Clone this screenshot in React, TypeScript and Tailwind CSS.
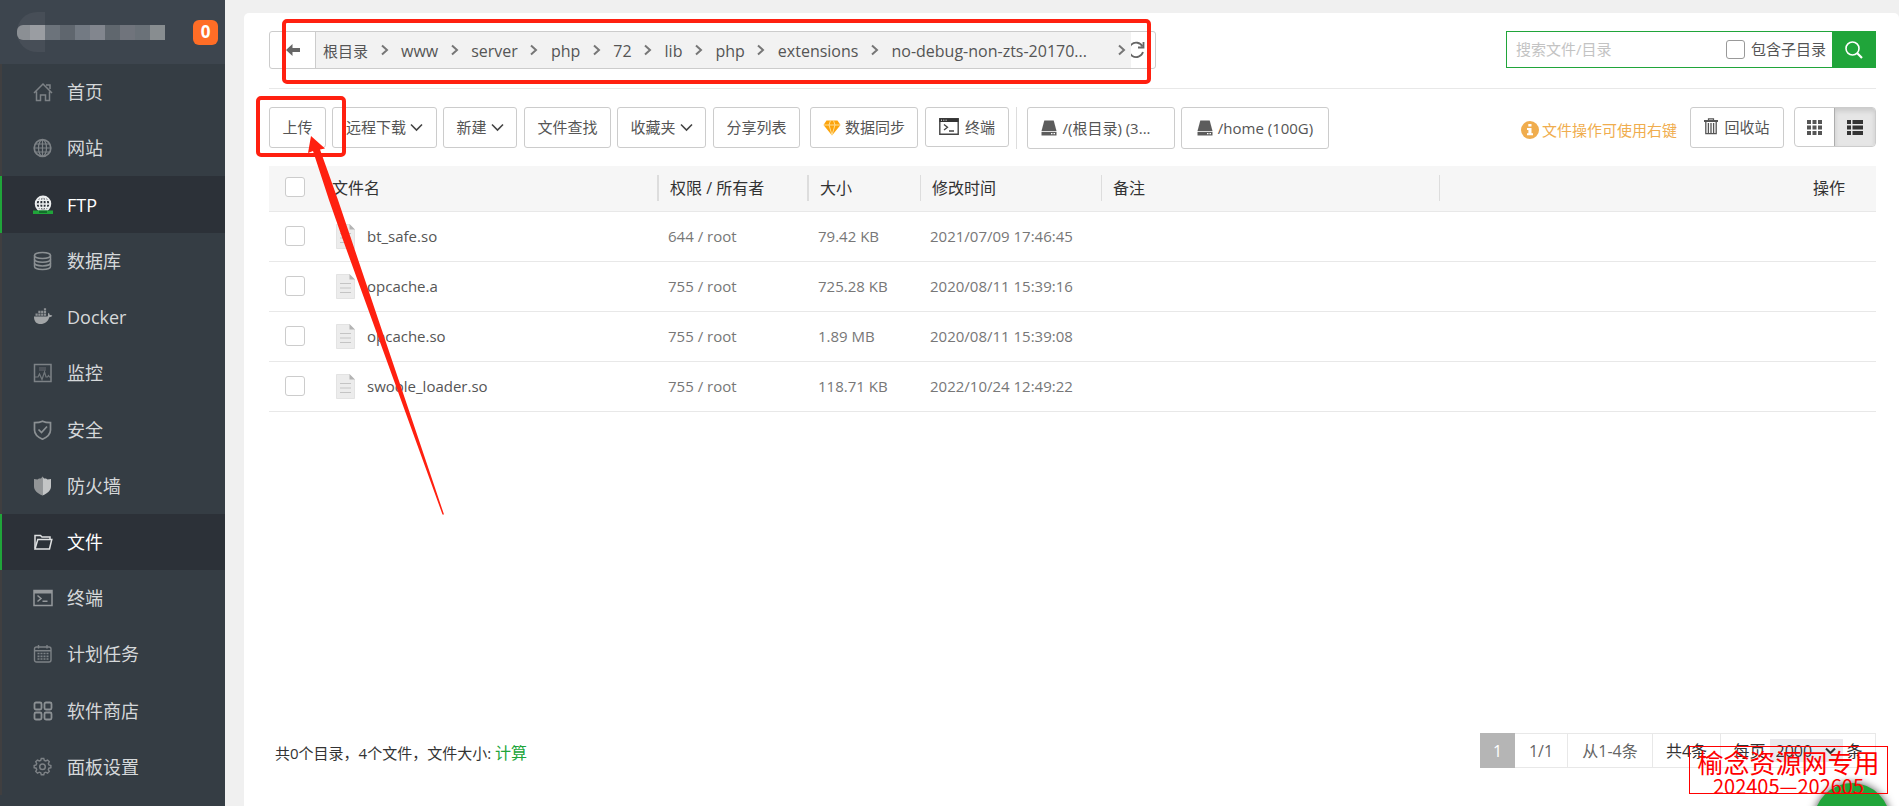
import React, { useState } from "react";

const HomeIcon = () => (
  <svg width="20" height="20" viewBox="0 0 20 20" fill="none" stroke="currentColor" strokeWidth="1.5">
    <path d="M1 11 10 2l9 9M3.500 9.500V18.500h4V13h5v5.500h4v-9M13 3h4v4" />
  </svg>
);
const GlobeIcon = () => (
  <svg width="20" height="20" viewBox="0 0 20 20" fill="none" stroke="currentColor" strokeWidth="1.2">
    <circle cx="9.500" cy="10" r="8.300" strokeWidth="1.700" />
    <ellipse cx="9.500" cy="10" rx="4" ry="8.300" />
    <path d="M9.500 2v16M1.500 10h16M2.700 6h13.600M2.700 14h13.600" />
  </svg>
);
const FtpIcon = () => (
  <svg width="20" height="20" viewBox="0 0 20 20" fill="none">
    <g stroke="#eceeef" strokeWidth="1.900">
      <circle cx="10" cy="8.800" r="7.300" />
      <ellipse cx="10" cy="8.800" rx="3.500" ry="7.300" strokeWidth="1.500" />
      <path d="M10 2v14M3 9h14M4 5.300h12M4 12.500h12" strokeWidth="1.400" />
    </g>
    <path d="M0 15.500h20V19H0z" fill="#20a53a" />
    <path d="M6 15.500h8V18H6z" fill="#12702a" />
  </svg>
);
const DatabaseIcon = () => (
  <svg width="20" height="20" viewBox="0 0 20 20" fill="none" stroke="#8b9093" strokeWidth="1.500">
    <ellipse cx="9.500" cy="4.500" rx="8" ry="3" />
    <path d="M1.500 4.500v11c0 1.700 3.600 3 8 3s8-1.300 8-3v-11" />
    <path d="M1.500 8.200c0 1.700 3.600 3 8 3s8-1.300 8-3M1.500 11.900c0 1.700 3.600 3 8 3s8-1.300 8-3" />
  </svg>
);
const DockerIcon = () => (
  <svg width="20" height="20" viewBox="0 0 20 20" fill="#a2a5a7">
    <path d="M1 9.500h12.800c.8 0 1.300-.6 1.200-1.500-.1-.9.100-1.600.5-2.200.8.600 1.200 1.400 1.200 2.300 1-.2 1.900 0 2.600.4-.5 1.200-1.400 1.700-3 1.700C15 14.500 11.800 17 7.500 17 3.500 17 .9 14.500 1 9.500Z" />
    <path d="M2.500 6.500h2.200v2.200H2.500zM5.300 6.500h2.200v2.200H5.300zM8.100 6.500h2.200v2.200H8.100zM10.900 6.500h2.200v2.200h-2.200zM5.300 3.800h2.200V6H5.300zM8.100 3.800h2.200V6H8.100zM10.900 3.800h2.200V6h-2.200zM10.900 1.300h2.200v2h-2.200z" opacity=".8" />
  </svg>
);
const MonitorIcon = () => (
  <svg width="20" height="20" viewBox="0 0 20 20" fill="none" stroke="currentColor">
    <path d="M1.500 1.500h16.500v17H1.500z" strokeWidth="1.500" />
    <path d="M6 5h7M6 7h7" strokeWidth="1" opacity=".7" />
    <path d="M2 14h3l1.500-3 2.500 5.500L11.500 9l1.500 5h1.500l1-1.500 1 1.500H18" strokeWidth="1.200" opacity=".85" />
  </svg>
);
const ShieldCheckIcon = () => (
  <svg width="20" height="20" viewBox="0 0 20 20" fill="none" stroke="#8b9093" strokeWidth="1.700">
    <path d="M9.500 1.200c2.400 1.200 5 1.500 8 1.500V10c0 4-3 7-8 9.200C4.500 17 1.500 14 1.500 10V2.700c3 0 5.600-.3 8-1.500Z" />
    <path d="m5.500 9.500 3 3 5.500-6" />
  </svg>
);
const FirewallIcon = () => (
  <svg width="20" height="20" viewBox="0 0 20 20">
    <path d="M9.500.5 8 2.500H6L4.500 3.500 1 3v7.500c0 4 3.500 7 8.500 9Z" fill="#929597" />
    <path d="m9.500.5 1.500 2h2l1.500 1 3.500-.5v7.500c0 4-3.500 7-8.500 9Z" fill="#c3c5c6" />
  </svg>
);
const FolderIcon = () => (
  <svg width="20" height="20" viewBox="0 0 20 20" fill="none" stroke="#dfe1e2" strokeWidth="1.500">
    <path d="M2 16.500V3.500h5.500L9 5h8v2.500" />
    <path d="M2 17 4.800 7.500h14L16.500 17Z" />
  </svg>
);
const TerminalIcon = () => (
  <svg width="20" height="20" viewBox="0 0 20 20" fill="none" stroke="#94989b">
    <path d="M1 2.500h18v15H1z" strokeWidth="1.500" />
    <path d="M1 4h18" strokeWidth="3" />
    <path d="m4.500 7.500 3.500 3-3.500 3M9.500 13.300h5" strokeWidth="1.500" />
  </svg>
);
const CalendarIcon = () => (
  <svg width="20" height="20" viewBox="0 0 20 20" fill="none" stroke="currentColor" strokeWidth="1.400">
    <rect x="1.500" y="3" width="16.500" height="15" rx="2" />
    <path d="M1.500 6.800H18M5.500 1v3.500M14 1v3.500" />
    <path d="M4.500 9.500h11M4.500 12.300h11M4.500 15h11" strokeWidth="1.700" strokeDasharray="2 1" />
  </svg>
);
const AppsIcon = () => (
  <svg width="20" height="20" viewBox="0 0 20 20" fill="none" stroke="#8b9093" strokeWidth="1.800">
    <rect x="1.500" y="1.500" width="7" height="7" rx="1.500" />
    <rect x="11.500" y="1.500" width="7" height="7" rx="1.500" />
    <rect x="1.500" y="11.500" width="7" height="7" rx="1.500" />
    <rect x="11.500" y="11.500" width="7" height="7" rx="1.500" />
  </svg>
);
const GearIcon = () => (
  <svg width="20" height="20" viewBox="0 0 20 20" fill="none" stroke="currentColor" strokeWidth="1.500">
    <path d="M8.200 1.500h2.600l.6 2.100 1.500.6 1.900-1 1.800 1.800-1 1.900.6 1.500 2.100.6v2.200l-2.100.6-.6 1.500 1 1.900-1.800 1.800-1.900-1-1.500.6-.6 2.100H8.200l-.6-2.100-1.500-.6-1.900 1-1.800-1.800 1-1.900-.6-1.500-2.100-.6V9l2.100-.6.600-1.500-1-1.900 1.800-1.800 1.900 1 1.500-.6Z" transform="translate(.5 0) scale(.95)" />
    <circle cx="9.500" cy="9.800" r="2.800" />
  </svg>
);

const ChevronRight = () => (
  <svg className="shrink-0" width="8" height="12" viewBox="0 0 8 12" fill="none" stroke="#777" strokeWidth="2">
    <path d="m1 1.500 5 4.500-5 4.500" />
  </svg>
);
const ChevronDown = () => (
  <svg width="13" height="9" viewBox="0 0 13 9" fill="none" stroke="#444" strokeWidth="1.600">
    <path d="m1 1.500 5.500 5.500L12 1.500" />
  </svg>
);
const DiskIcon = () => (
  <svg width="16" height="16" viewBox="0 0 16 16">
    <path d="M3.300.5h9.400L15.500 11H.5Z" fill="#5c5c5c" />
    <path d="M.5 11.800h15v3.700H.5z" fill="#5c5c5c" />
    <path d="M10 13h1.500v1.300H10zM12.500 13H14v1.300h-1.500z" fill="#fff" />
  </svg>
);
const DiamondIcon = () => (
  <svg width="18" height="16" viewBox="0 0 18 16">
    <path d="M3.500.5h11L17.500 5 9 15.500.5 5Z" fill="#fca40c" />
    <path d="M1 5h16M6 5l3 10 3-10M6 5l1.500-4.500M12 5 10.500.5" stroke="#ffe3a3" strokeWidth=".9" fill="none" />
  </svg>
);
const WindowIcon = () => (
  <svg className="mb-[2px]" width="20" height="17" viewBox="0 0 20 17" fill="none">
    <path d="M.8.8h18.400v15.400H.8z" stroke="#444" strokeWidth="1.400" fill="#fff" />
    <path d="M.5.5h19v3.500H.5z" fill="#333" />
    <path d="M2 2.200h1M4.300 2.200h1M6.600 2.200h1" stroke="#fff" />
    <path d="m5 6.500 3.500 2.800L5 12M10 13h5" stroke="#444" strokeWidth="1.300" />
  </svg>
);
const TrashIcon = () => (
  <svg className="mb-[3px]" width="14" height="17" viewBox="0 0 14 17" fill="none" stroke="#555">
    <path d="M0 3h14" strokeWidth="2" />
    <path d="M4.500 2.500V.8h5v1.700" strokeWidth="1.200" />
    <path d="M1.800 4v11.600h10.400V4M4.400 5v10M7 5v10M9.600 5v10" strokeWidth="1.300" />
  </svg>
);
const FileIcon = () => (
  <svg className="shrink-0" width="19" height="25" viewBox="0 0 19 25">
    <path d="M.5.5h13l5 5v19H.5Z" fill="#ececec" stroke="#e3e3e3" />
    <path d="M13.500 0v5.500H19Z" fill="#b4b4b4" />
    <path d="M4 9.500h11M4 14h11M4 18.500h11" stroke="#c4c4c4" />
  </svg>
);

const menu = [
  { label: "首页", Icon: HomeIcon },
  { label: "网站", Icon: GlobeIcon },
  { label: "FTP", Icon: FtpIcon, active: true },
  { label: "数据库", Icon: DatabaseIcon },
  { label: "Docker", Icon: DockerIcon },
  { label: "监控", Icon: MonitorIcon },
  { label: "安全", Icon: ShieldCheckIcon },
  { label: "防火墙", Icon: FirewallIcon },
  { label: "文件", Icon: FolderIcon, active: true },
  { label: "终端", Icon: TerminalIcon },
  { label: "计划任务", Icon: CalendarIcon },
  { label: "软件商店", Icon: AppsIcon },
  { label: "面板设置", Icon: GearIcon },
];

const crumbs = ["www", "server", "php", "72", "lib", "php", "extensions"];

const files = [
  { name: "bt_safe.so", perm: "644 / root", size: "79.42 KB", time: "2021/07/09 17:46:45" },
  { name: "opcache.a", perm: "755 / root", size: "725.28 KB", time: "2020/08/11 15:39:16" },
  { name: "opcache.so", perm: "755 / root", size: "1.89 MB", time: "2020/08/11 15:39:08" },
  { name: "swoole_loader.so", perm: "755 / root", size: "118.71 KB", time: "2022/10/24 12:49:22" },
];

const mosaic = [
  "bg-[#8b8f94]", "bg-[#9a9da2]", "bg-[#6c737b]", "bg-[#5f666e]", "bg-[#737a83]",
  "bg-[#82868e]", "bg-[#60676e]", "bg-[#70747c]", "bg-[#6a7178]", "bg-[#888d90]",
];

const btn =
  "flex shrink-0 items-center justify-center whitespace-nowrap rounded-[3px] border border-[#ccc] bg-white text-[15px] text-[#555]";
const check =
  "block size-5 appearance-none rounded-[3px] border border-[#ccc] bg-white checked:bg-[#20a53a]";

function Sidebar() {
  return (
    <aside className="flex w-[225px] shrink-0 flex-col bg-[#353d44]">
      <header className="flex h-16 shrink-0 items-center justify-between bg-[#3d454e] pr-[7px] pl-[17px]">
        <div className="relative flex h-10 items-center">
          <span className="absolute top-0 left-0 h-10 w-7 rounded-l-full bg-[#474e57]" />
          <span className="relative flex overflow-hidden rounded-l-md">
            {mosaic.map((c, i) => (
              <span key={i} className={`block h-[15px] w-[15px] first:w-[13px] ${c}`} />
            ))}
          </span>
        </div>
        <span className="flex size-[25px] items-center justify-center rounded-md bg-[#ff6d26] text-[17px] font-bold text-white">
          0
        </span>
      </header>
      <nav className="flex flex-1 flex-col pb-[11px]">
        {menu.map(({ label, Icon, active }) => (
          <a
            key={label}
            href="#"
            className={`flex min-h-[50px] flex-1 items-center gap-[14px] border-l-2 pl-[31px] text-[18px] leading-6 ${
              active ? "border-[#20a53a] bg-[#2c3138] text-white" : "border-[#403f40] text-[#d5d8da]"
            }`}
          >
            <span className="text-[#7d8286]">
              <Icon />
            </span>
            {label}
          </a>
        ))}
      </nav>
    </aside>
  );
}

function AddressBar() {
  return (
    <div className="flex h-[38px] w-[887px] shrink-0 overflow-hidden rounded-[3px] border border-[#ccc] bg-white">
      <button aria-label="返回" className="flex w-[46px] shrink-0 items-center justify-center border-r border-[#ccc]">
        <svg width="14" height="12" viewBox="0 0 14 12" fill="#666">
          <path d="M0 6 6.500 0v4H14v4H6.500v4Z" />
        </svg>
      </button>
      <div className="relative z-10 flex flex-1 items-center bg-[#f2f2f2] pl-[7px] text-[16px] text-[#555] [&>a]:pt-[2px]">
        <a href="#" className="text-[15px]">根目录</a>
        {crumbs.map((c, i) => (
          <React.Fragment key={i}>
            <span className="flex w-[33px] justify-center"><ChevronRight /></span>
            <a href="#">{c}</a>
          </React.Fragment>
        ))}
        <span className="flex w-[33px] justify-center"><ChevronRight /></span>
        <a href="#">no-debug-non-zts-20170...</a>
        <span className="mr-[5px] ml-auto"><ChevronRight /></span>
      </div>
      <button aria-label="刷新" className="flex w-6 shrink-0 items-center">
        <svg className="-ml-1 shrink-0" width="18" height="18" viewBox="0 0 18 18" fill="none" stroke="#666" strokeWidth="1.800">
          <path d="M15.500 5.500A7.200 7.200 0 1 0 16 11" />
          <path d="M16.500 1v5.500H11" />
        </svg>
      </button>
    </div>
  );
}

function SearchBox() {
  return (
    <div className="flex h-[37px] w-[370px] border border-[#20a53a] bg-white text-[15px]">
      <input
        aria-label="搜索文件/目录"
        placeholder="搜索文件/目录"
        className="min-w-0 flex-1 pl-[9px] outline-none placeholder:text-[#c3c3c3]"
      />
      <label className="flex shrink-0 items-center gap-[6px] pr-[6px] text-[#555]">
        <input type="checkbox" className="size-[19px] appearance-none rounded-[3px] border border-[#999] bg-white" />
        包含子目录
      </label>
      <button aria-label="搜索" className="flex w-[43px] shrink-0 items-center justify-center bg-[#20a53a]">
        <svg width="18" height="18" viewBox="0 0 18 18" fill="none" stroke="#fff">
          <circle cx="7.500" cy="7.500" r="6.500" strokeWidth="1.600" />
          <path d="m12.300 12.300 4.700 4.700" strokeWidth="2.200" />
        </svg>
      </button>
    </div>
  );
}

function Toolbar() {
  return (
    <div className="mt-[18px] flex h-[42px] items-start">
      <button className={`${btn} h-[41px] w-[57px]`}>上传</button>
      <button className={`${btn} ml-[6px] h-[41px] w-[105px] gap-1`}>远程下载<ChevronDown /></button>
      <button className={`${btn} ml-[6px] h-[41px] w-[74px] gap-1`}>新建<ChevronDown /></button>
      <button className={`${btn} ml-[7px] h-[41px] w-[87px]`}>文件查找</button>
      <button className={`${btn} ml-[6px] h-[41px] w-[89px] gap-1`}>收藏夹<ChevronDown /></button>
      <button className={`${btn} ml-[7px] h-[41px] w-[87px]`}>分享列表</button>
      <button className={`${btn} ml-[10px] h-[41px] w-[108px] gap-1`}><DiamondIcon />数据同步</button>
      <button className={`${btn} ml-[7px] h-10 w-[84px] gap-[6px]`}><WindowIcon />终端</button>
      <span className="ml-[7px] h-full w-px bg-[#ddd]" />
      <button className={`${btn} ml-[10px] h-[42px] w-[148px] gap-[5px] pr-[10px]`}><DiskIcon />/(根目录) (3...</button>
      <button className={`${btn} ml-[6px] h-[42px] w-[148px] gap-[5px]`}><DiskIcon />/home (100G)</button>

      <div className="ml-auto flex items-start">
        <p className="flex h-[46px] items-center gap-[3px] text-[15px] whitespace-nowrap text-[#f0ad4e]">
          <svg width="18" height="18" viewBox="0 0 18 18">
            <circle cx="9" cy="9" r="9" fill="#f0ad4e" />
            <path d="M7.300 3h3.200v2.600H7.300zM6 7h4.500v5.300H12v2H6v-2h1.400V9H6z" fill="#fff" />
          </svg>
          文件操作可使用右键
        </p>
        <button className={`${btn} ml-[13px] h-[41px] w-[94px] gap-[6px]`}><TrashIcon />回收站</button>
        <div className="ml-[10px] flex h-10 overflow-hidden rounded-[4px] border border-[#ccc]">
          <button aria-label="图标视图" className="flex w-[39px] items-center justify-center">
            <svg width="15" height="15" viewBox="0 0 15 15" fill="#555">
              <path d="M0 0h4v4H0zM5.500 0h4v4h-4zM11 0h4v4h-4zM0 5.500h4v4H0zM5.500 5.500h4v4h-4zM11 5.500h4v4h-4zM0 11h4v4H0zM5.500 11h4v4h-4zM11 11h4v4h-4z" />
            </svg>
          </button>
          <button aria-label="列表视图" className="flex w-[41px] items-center justify-center border-l border-[#adadad] bg-[#e6e6e6] shadow-[inset_0_3px_5px_rgba(0,0,0,0.125)]">
            <svg width="16" height="15" viewBox="0 0 16 15" fill="#333">
              <path d="M0 0h4v4H0zM5.500 0H16v4H5.500zM0 5.500h4v4H0zM5.500 5.500H16v4H5.500zM0 11h4v4H0zM5.500 11H16v4H5.500z" />
            </svg>
          </button>
        </div>
      </div>
    </div>
  );
}

function HeadCell({ children, line = "w-px" }: { children?: React.ReactNode; line?: string }) {
  return (
    <th className="p-0 text-left font-normal">
      <div className="flex h-[26px] items-center justify-between pl-[11px]">
        <span>{children}</span>
        <span className={`h-full bg-[#ddd] ${line}`} />
      </div>
    </th>
  );
}

function FileTable() {
  return (
    <table className="mt-[17px] w-full table-fixed border-collapse">
      <colgroup>
        <col className="w-[52px]" />
        <col className="w-[338px]" />
        <col className="w-[150px]" />
        <col className="w-[112px]" />
        <col className="w-[181px]" />
        <col className="w-[338px]" />
        <col />
      </colgroup>
      <thead>
        <tr className="h-[45px] border-b border-[#e8e8e8] bg-[#f6f6f6] text-[16px] text-[#333]">
          <th className="p-0 pb-[2px] pl-4 text-left"><input type="checkbox" aria-label="全选" className={check} /></th>
          <HeadCell line="w-[2px]">文件名</HeadCell>
          <HeadCell line="w-[2px]">权限 / 所有者</HeadCell>
          <HeadCell>大小</HeadCell>
          <HeadCell>修改时间</HeadCell>
          <HeadCell>备注</HeadCell>
          <th className="p-0 pr-[31px] text-right font-normal">操作</th>
        </tr>
      </thead>
      <tbody>
        {files.map((f) => (
          <tr key={f.name} className="h-[50px] border-b border-[#e8e8e8] text-[15px] text-[#777]">
            <td className="p-0 pl-4"><input type="checkbox" aria-label={f.name} className={check} /></td>
            <td className="p-0">
              <a href="#" className="flex items-center gap-3 pl-[15px] text-[#555]">
                <FileIcon />
                {f.name}
              </a>
            </td>
            <td className="p-0 pl-[9px]">{f.perm}</td>
            <td className="p-0 pl-[9px]">{f.size}</td>
            <td className="p-0 pl-[9px]">{f.time}</td>
            <td />
            <td />
          </tr>
        ))}
      </tbody>
    </table>
  );
}

function Footer() {
  const [perPage, setPerPage] = useState("2000");
  return (
    <footer className="mt-auto flex items-center justify-between pb-[38px] pl-[6px] text-[15px] text-[#333]">
      <p className="pt-1">
        共0个目录，4个文件，文件大小: <a href="#" className="text-[16px] text-[#20a53a]">计算</a>
      </p>
      <div className="flex h-[35px] w-[396px] border border-l-0 border-[#e8e8e8] text-[16px] *:flex *:items-center *:justify-center">
        <span className="-my-px w-[35px] bg-[#b5b5b5] text-white">1</span>
        <span className="w-[53px] border-r border-[#e8e8e8] text-[#666]">1/1</span>
        <span className="w-[85px] border-r border-[#e8e8e8] text-[#666]">从1-4条</span>
        <span className="w-[68px] border-r border-[#e8e8e8]">共4条</span>
        <label className="flex-1 gap-1 whitespace-nowrap">
          每页
          <span className="relative flex items-center">
            <select
              value={perPage}
              onChange={(e) => setPerPage(e.target.value)}
              className="h-[23px] w-[73px] appearance-none bg-[#e9e9ed] pl-[6px]"
            >
              <option>500</option>
              <option>1000</option>
              <option>2000</option>
            </select>
            <svg className="pointer-events-none absolute right-[7px]" width="11" height="8" viewBox="0 0 11 8" fill="none" stroke="#333" strokeWidth="2">
              <path d="m1 1.500 4.500 4.500L10 1.500" />
            </svg>
          </span>
          条
        </label>
      </div>
    </footer>
  );
}

export default function App() {
  return (
    <div className="relative flex min-h-screen overflow-hidden bg-[#f0f0f0] font-['Open_Sans','Noto_Sans_CJK_SC',sans-serif]">
      <Sidebar />
      <main className="mt-[13px] ml-[19px] flex min-w-0 flex-1 flex-col rounded-t-[5px] bg-white pr-[23px] pl-[25px]">
        <div className="flex items-start justify-between border-b border-[#e8e8e8] pt-[18px] pb-[19px]">
          <AddressBar />
          <SearchBox />
        </div>
        <Toolbar />
        <FileTable />
        <Footer />
      </main>

      <button aria-label="客服" className="absolute right-[9px] -bottom-[53px] size-[76px] rounded-full bg-[#20a53a] shadow-[0_0_8px_rgba(0,0,0,0.7)]" />

      <div className="pointer-events-none absolute right-[11px] bottom-3 flex h-12 w-[199px] flex-col items-center border border-[#f00] font-['Noto_Sans_CJK_SC',sans-serif] text-[#f00]">
        <span className="text-[26px] leading-[30px] whitespace-nowrap">榆念资源网专用</span>
        <span className="text-[20px] leading-[18px] whitespace-nowrap">202405—202605</span>
      </div>

      <div className="pointer-events-none absolute top-[19px] left-[282px] h-[65px] w-[869px] rounded-[5px] border-4 border-[#ff2010]" />
      <div className="pointer-events-none absolute top-[96px] left-[256px] h-[61px] w-[90px] rounded-[5px] border-4 border-[#ff2010]" />
      <svg className="pointer-events-none absolute top-[130px] left-[300px]" width="150" height="390" viewBox="300 130 150 390" fill="#ff2010">
        <path d="M311 136 325 148.500 320 149.500 338 200 351.500 240 444 514.500 442.500 514.500 343 240 329 200 313 151 308 153Z" />
      </svg>
    </div>
  );
}
